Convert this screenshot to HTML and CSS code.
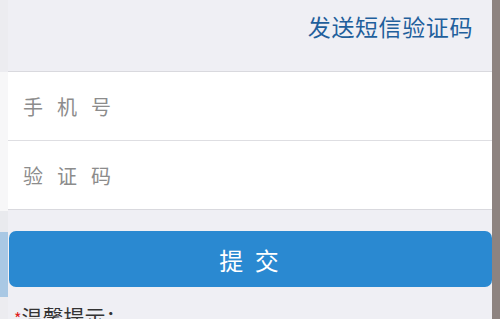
FILE: index.html
```html
<!DOCTYPE html>
<html lang="zh-CN">
<head>
<meta charset="utf-8">
<link rel="stylesheet" href="styles.css">
</head>
<body>
<div class="screen">
  <div class="edge">
    <div class="edge-top"></div>
    <div class="edge-panel"></div>
    <div class="edge-gap"></div>
    <div class="edge-btn"></div>
    <div class="edge-rest"></div>
  </div>
  <div class="main">
    <div class="header">
      <span class="send">发送短信验证码</span>
    </div>
    <div class="panel">
      <div class="row"><span class="ph">手机号</span></div>
      <div class="row"><span class="ph">验证码</span></div>
    </div>
    <div class="btn-wrap">
      <div class="btn">提 交</div>
    </div>
    <div class="tip"><span class="star">*</span>温馨提示：</div>
  </div>
  <div class="side"></div>
</div>
</body>
</html>
```
FILE: styles.css
```css
html, body {
  margin: 0;
  padding: 0;
}
body {
  width: 500px;
  height: 319px;
  overflow: hidden;
  background: #efeff4;
  font-family: "Noto Sans CJK SC", "Noto Sans", sans-serif;
}
.screen {
  display: flex;
  height: 319px;
}
.edge {
  width: 8px;
  display: flex;
  flex-direction: column;
  flex-shrink: 0;
}
.edge > div { flex-shrink: 0; }
.edge-top { height: 72px; background: #ececf0; }
.edge-panel { height: 139px; background: #f7f7f8; }
.edge-gap { height: 21px; background: #e9eaee; }
.edge-btn { height: 65px; background: #a9c8e4; }
.edge-rest { flex: 1; background: #ececf0; }
.main {
  width: 484px;
  flex-shrink: 0;
  display: flex;
  flex-direction: column;
}
.main > div { flex-shrink: 0; }
.header {
  height: 71px;
  display: flex;
  justify-content: flex-end;
  align-items: flex-start;
  padding-right: 19px;
  box-sizing: border-box;
}
.send {
  margin-top: 10px;
  font-size: 23px;
  line-height: 32px;
  color: #1f5f9c;
  letter-spacing: 0.6px;
}
.panel {
  background: #fff;
  border-top: 1px solid #d9d9de;
  border-bottom: 1px solid #d9d9de;
}
.row {
  height: 68px;
  display: flex;
  align-items: center;
  padding-left: 15px;
}
.row + .row {
  border-top: 1px solid #dedee2;
}
.ph {
  font-size: 20px;
  color: #8c8c8c;
  letter-spacing: 14px;
}
.btn-wrap {
  padding: 21px 0 0 1px;
}
.btn {
  height: 56px;
  border-radius: 7px;
  background: #2a89d1;
  color: #fff;
  font-size: 24px;
  display: flex;
  align-items: center;
  justify-content: center;
  letter-spacing: 3px;
}
.tip {
  margin-top: 14px;
  padding-left: 6px;
  font-size: 21px;
  line-height: 30px;
  color: #333;
}
.star {
  color: #e02020;
  font-size: 16px;
}
.side {
  flex: 1;
  background: #8d8380;
}
```
